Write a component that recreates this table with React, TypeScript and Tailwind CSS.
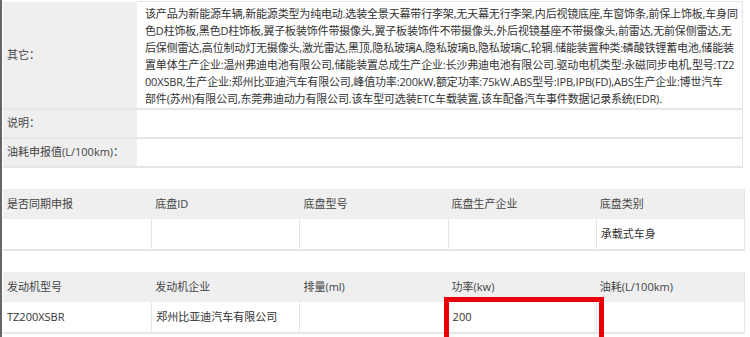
const otherLines = [
  '该产品为新能源车辆,新能源类型为纯电动.选装全景天幕带行李架,无天幕无行李架,内后视镜底座,车窗饰条,前保上饰板,车身同',
  '色D柱饰板,黑色D柱饰板,翼子板装饰件带摄像头,翼子板装饰件不带摄像头,外后视镜基座不带摄像头,前雷达,无前保侧雷达,无',
  '后保侧雷达,高位制动灯无摄像头,激光雷达,黑顶,隐私玻璃A,隐私玻璃B,隐私玻璃C,轮辋.储能装置种类:磷酸铁锂蓄电池,储能装',
  '置单体生产企业:温州弗迪电池有限公司,储能装置总成生产企业:长沙弗迪电池有限公司.驱动电机类型:永磁同步电机,型号:TZ2',
  '00XSBR,生产企业:郑州比亚迪汽车有限公司,峰值功率:200kW,额定功率:75kW.ABS型号:IPB,IPB(FD),ABS生产企业:博世汽车',
  '部件(苏州)有限公司,东莞弗迪动力有限公司.该车型可选装ETC车载装置,该车配备汽车事件数据记录系统(EDR).',
]

const chassisHead = ['是否同期申报', '底盘ID', '底盘型号', '底盘生产企业', '底盘类别']
const chassisRow = ['', '', '', '', '承载式车身']
const engineHead = ['发动机型号', '发动机企业', '排量(ml)', '功率(kw)', '油耗(L/100km)']
const engineRow = ['TZ200XSBR', '郑州比亚迪汽车有限公司', '', '200', '']

function InfoRow({ label, children, tall }: { label: string; children?: React.ReactNode; tall?: boolean }) {
  return (
    <div className="grid grid-cols-[134px_1fr]">
      <div className="flex items-center bg-[#efefef] pl-1 border-b-2 border-[#e7e7e7] text-[#444]">
        {label}
      </div>
      <div
        className={
          tall
            ? 'bg-white border-r border-b-2 border-[#e6e6e6] pl-2 pt-[3px] pb-px leading-[17px] tracking-[-0.17px]'
            : 'h-[29px] bg-white border-r border-b-2 border-[#e6e6e6]'
        }
      >
        {children}
      </div>
    </div>
  )
}

function GridTable({ head, row, mark }: { head: string[]; row: string[]; mark?: number }) {
  return (
    <div className="pr-[5px]">
      <div className="grid grid-cols-5 h-[30px] bg-[#efefef] border-r border-[#e3e3e3]">
        {head.map((h) => (
          <div key={h} className="flex items-center pl-1 text-[#444]">
            {h}
          </div>
        ))}
      </div>
      <div className="grid grid-cols-5 h-[32px] bg-white border-r border-b-2 border-[#e6e6e6]">
        {row.map((v, i) => (
          <div
            key={i}
            className={
              'relative flex items-center pl-1 text-[#333] ' + (i > 0 ? 'border-l border-[#e6e6e6]' : '')
            }
          >
            {v}
            {mark === i && (
              <div className="absolute -left-[5px] -top-[5px] w-[160px] h-[48px] border-[5px] border-[#e8000b]" />
            )}
          </div>
        ))}
      </div>
    </div>
  )
}

export default function App() {
  return (
    <div className="w-[750px] h-[337px] overflow-hidden bg-white border-l-2 border-[#666] pl-px text-[11px] font-['Open_Sans','Noto_Sans_CJK_SC',sans-serif]">
      <div className="pr-[7px] pt-px">
        <div className="border-t border-[#e6e6e6] ml-[134px]" />
        <InfoRow label="其它：" tall>
          {otherLines.map((l) => (
            <div key={l} className="whitespace-nowrap text-[#333]">
              {l}
            </div>
          ))}
        </InfoRow>
        <InfoRow label="说明：" />
        <InfoRow label="油耗申报值(L/100km)：" />
      </div>

      <div className="h-[21px]" />
      <GridTable head={chassisHead} row={chassisRow} />

      <div className="h-[21px]" />
      <GridTable head={engineHead} row={engineRow} mark={3} />
    </div>
  )
}
